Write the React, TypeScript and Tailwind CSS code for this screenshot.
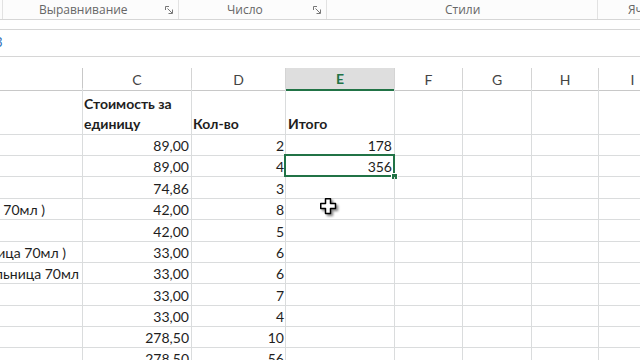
import clsx from "clsx";

type Row = {
  h: string;
  b?: string;
  bPad?: string;
  c?: string;
  d?: string;
  e?: string;
  bold?: boolean;
  selected?: boolean;
};

const rows: Row[] = [
  { h: "h-[21px]", c: "89,00", d: "2", e: "178" },
  { h: "h-[21px]", c: "89,00", d: "4", e: "356", selected: true },
  { h: "h-[22px]", c: "74,86", d: "3" },
  { h: "h-[21px]", b: "ка 70мл )", bPad: "pr-[37px]", c: "42,00", d: "8" },
  { h: "h-[22px]", c: "42,00", d: "5" },
  { h: "h-[21px]", b: "ница 70мл )", bPad: "pr-[16px]", c: "33,00", d: "6" },
  { h: "h-[21px]", b: "альница 70мл", bPad: "pr-[3px]", c: "33,00", d: "6" },
  { h: "h-[22px]", c: "33,00", d: "7" },
  { h: "h-[21px]", c: "33,00", d: "4" },
  { h: "h-[21px]", c: "278,50", d: "10" },
  { h: "h-[21px]", c: "278,50", d: "56" },
];

const gridCols = "grid grid-cols-[83px_109px_94px_109px_68px_69px_67px_68px]";
const cell = "border-r border-b border-[#dadcdd] flex items-end overflow-hidden whitespace-nowrap leading-[18px]";

function Launcher() {
  return (
    <svg width="8" height="8" viewBox="0 0 8 8" className="text-[#777]">
      <path d="M0.5 4V0.5H4" fill="none" stroke="currentColor" strokeWidth="1" />
      <path d="M2.5 2.5L7 7" fill="none" stroke="currentColor" strokeWidth="1" />
      <path d="M3.5 7.5H7.5V3.5" fill="none" stroke="currentColor" strokeWidth="1" />
    </svg>
  );
}

function Ribbon() {
  return (
    <div className="flex h-[20px] bg-[#fcfcfc] border-b border-[#d6d6d6] text-[12px] text-[#666] font-['Open_Sans'] leading-[18px] overflow-hidden">
      <div className="w-[3px] shrink-0 border-r border-[#e2e2e2]" />
      <div className="w-[176px] shrink-0 flex items-center border-r border-[#e2e2e2] pr-[5px]">
        <span className="ml-[36px]">Выравнивание</span>
        <span className="ml-auto"><Launcher /></span>
      </div>
      <div className="w-[148px] shrink-0 flex items-center border-r border-[#e2e2e2] pr-[5px]">
        <span className="ml-[48px]">Число</span>
        <span className="ml-auto"><Launcher /></span>
      </div>
      <div className="w-[271px] shrink-0 flex items-center border-r border-[#e2e2e2]">
        <span className="ml-[118px]">Стили</span>
      </div>
      <div className="flex items-center">
        <span className="ml-[30px]">Ячейки</span>
      </div>
    </div>
  );
}

function Cursor() {
  return (
    <svg
      width="17"
      height="17"
      viewBox="0 0 17 17"
      className="absolute left-[320px] top-[198px] drop-shadow-[2px_2px_1px_rgba(0,0,0,0.45)]"
    >
      <path
        d="M5.5 0.75H10.5V5.5H15.5V10.5H10.5V15.5H5.5V10.5H0.75V5.5H5.5Z"
        fill="#fff"
        stroke="#000"
        strokeWidth="1.5"
        strokeLinejoin="round"
      />
    </svg>
  );
}

export default function App() {
  return (
    <div className="relative w-[640px] h-[360px] overflow-hidden bg-white font-['Lato'] text-[14px] text-[#1e1e1e]">
      <Ribbon />
      <div className="h-[9px]" />
      <div className="h-[28px] border-y border-[#d6d6d6] flex items-center overflow-hidden">
        <span className="-ml-[5px] text-[13px] text-[#2f6fb8]">3</span>
      </div>
      <div className="h-[11px]" />

      <div className={clsx(gridCols, "h-[20px] text-[14px] text-[#444]")}>
        <div className="border-r border-b border-[#c8c8c8]" />
        {["C", "D", "E", "F", "G", "H", "I"].map((l) => (
          <div
            key={l}
            className={clsx(
              "flex items-center justify-center border-r border-[#d4d4d4]",
              l === "E"
                ? "bg-[#dedede] border-b-2 border-b-[#217346] text-[#217346] font-bold"
                : "border-b border-b-[#c8c8c8]"
            )}
          >
            {l}
          </div>
        ))}
      </div>

      <div className={clsx(gridCols, "h-[47px] font-bold")}>
        <div className={cell} />
        <div className={clsx(cell, "leading-[20px] pl-[1px]")}>
          <span className="whitespace-normal">Стоимость за<br />единицу</span>
        </div>
        <div className={clsx(cell, "leading-[20px] pl-[1px]")}>Кол-во</div>
        <div className={clsx(cell, "leading-[20px] pl-[2px]")}>Итого</div>
        <div className={cell} />
        <div className={cell} />
        <div className={cell} />
        <div className={cell} />
      </div>

      {rows.map((r, i) => (
        <div key={i} className={clsx(gridCols, r.h)}>
          <div className={clsx(cell, "justify-end", r.bPad)}>{r.b}</div>
          <div className={clsx(cell, "justify-end pr-[2px]")}>{r.c}</div>
          <div className={clsx(cell, "justify-end pr-[1px]")}>{r.d}</div>
          <div className={clsx(cell, "relative justify-end pr-[2px] overflow-visible")}>
            {r.e}
            {r.selected && (
              <>
                <div className="absolute -left-[2px] -top-[2px] -right-[1px] -bottom-[1px] border-2 border-[#217346]" />
                <div className="absolute -right-[4px] -bottom-[4px] w-[7px] h-[7px] bg-[#217346] border border-white" />
              </>
            )}
          </div>
          <div className={cell} />
          <div className={cell} />
          <div className={cell} />
          <div className={cell} />
        </div>
      ))}

      <Cursor />
    </div>
  );
}
